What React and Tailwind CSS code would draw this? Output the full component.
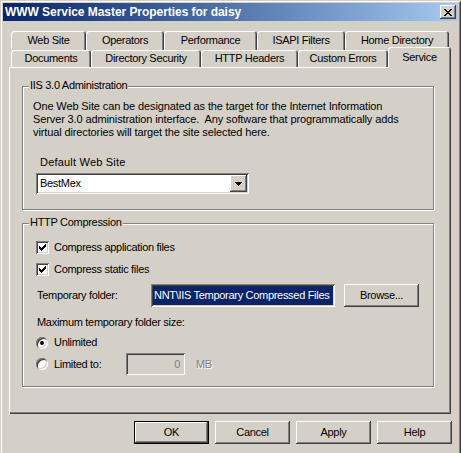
import { useState } from "react";

const raised = "shadow-[inset_-1px_-1px_#404040,inset_1px_1px_#fff,inset_-2px_-2px_#808080]";
const sunken = "shadow-[inset_1px_1px_#808080,inset_-1px_-1px_#fff,inset_2px_2px_#404040,inset_-2px_-2px_#d4d0c8]";
const tabEdge = "shadow-[inset_1px_1px_#fff,inset_-1px_0_#404040,inset_-2px_0_#808080]";

const rowOne = [
  { label: "Web Site", w: "w-[75px]" },
  { label: "Operators", w: "w-[78px]" },
  { label: "Performance", w: "w-[93px]" },
  { label: "ISAPI Filters", w: "w-[88px]" },
  { label: "Home Directory", w: "w-[104px]" },
];

const rowTwo = [
  { label: "Documents", w: "w-[80px]" },
  { label: "Directory Security", w: "w-[110px]" },
  { label: "HTTP Headers", w: "w-[97px]" },
  { label: "Custom Errors", w: "w-[90px]" },
];

function Tab({ label, w }) {
  return (
    <div className={`flex h-full ${w} items-center justify-center rounded-t-[3px] bg-[#d4d0c8] ${tabEdge}`}>
      {label}
    </div>
  );
}

function GroupBox({ title, children, className = "" }) {
  return (
    <div className={`flex w-[412px] flex-col border border-[#808080] shadow-[inset_1px_1px_#fff,1px_1px_#fff] ${className}`}>
      <span className="-mt-[8px] ml-[6px] self-start bg-[#d4d0c8] px-[1px] leading-[13px]">{title}</span>
      {children}
    </div>
  );
}

function CheckBox({ checked, label, onToggle }) {
  return (
    <div className="flex h-[13px] items-center gap-[5px]" onClick={onToggle}>
      <div className={`h-[13px] w-[13px] bg-white ${sunken}`}>
        {checked && (
          <svg width="13" height="13" viewBox="0 0 13 13" shapeRendering="crispEdges">
            <polygon points="3,5 5,7 10,2 10,5 5,10 3,8" fill="#000" />
          </svg>
        )}
      </div>
      <span className="leading-[13px]">{label}</span>
    </div>
  );
}

function Radio({ checked }) {
  return (
    <div className="flex h-[12px] w-[12px] items-center justify-center rounded-full bg-white shadow-[inset_1px_1px_#808080,inset_-1px_-1px_#fff,inset_2px_2px_#404040,inset_-2px_-2px_#d4d0c8]">
      {checked && <div className="h-[4px] w-[4px] rounded-full bg-black" />}
    </div>
  );
}

function Button({ label, isDefault }) {
  return (
    <button
      className={`flex h-[23px] w-[75px] items-center justify-center bg-[#d4d0c8] ${
        isDefault ? "border border-black" : ""
      } ${raised}`}
    >
      {label}
    </button>
  );
}

export default function App() {
  const [appFiles, setAppFiles] = useState(true);
  const [staticFiles, setStaticFiles] = useState(true);

  return (
    <div className="h-[453px] w-[461px] overflow-hidden bg-[#d4d0c8] font-['Liberation_Sans',Arial,sans-serif] text-[11px] tracking-[-0.3px] text-black">
      <div className="flex h-[480px] flex-col p-[3px] shadow-[inset_1px_1px_#d4d0c8,inset_-1px_-1px_#404040,inset_2px_2px_#fff,inset_-2px_-2px_#808080]">
        {/* Title bar */}
        <div className="flex h-[18px] items-center justify-between bg-linear-to-r from-[#0a246a] to-[#a6caf0] pl-[2px]">
          <span className="text-[12px] font-bold tracking-[-0.05px] text-white">WWW Service Master Properties for daisy</span>
          <div className={`mr-[2px] flex h-[14px] w-[16px] items-center justify-center bg-[#d4d0c8] ${raised}`}>
            <svg width="8" height="7" viewBox="0 0 8 7" shapeRendering="crispEdges">
              <path d="M0 0h2v1h-2zM6 0h2v1h-2zM1 1h2v1h-2zM5 1h2v1h-2zM2 2h4v1h-4zM3 3h2v1h-2zM2 4h4v1h-4zM1 5h2v1h-2zM5 5h2v1h-2zM0 6h2v1h-2zM6 6h2v1h-2z" fill="#000" />
            </svg>
          </div>
        </div>

        <div className="flex flex-col pl-[6px] pt-[10px]">
          {/* Tabs */}
          <div className="ml-[2px] flex h-[19px]">
            {rowOne.map((t) => (
              <Tab key={t.label} {...t} />
            ))}
          </div>
          <div className="ml-[2px] flex h-[17px]">
            {rowTwo.map((t) => (
              <Tab key={t.label} {...t} />
            ))}
            <div className={`relative z-10 -mt-[3px] flex h-[21px] w-[63px] justify-center self-start rounded-t-[3px] bg-[#d4d0c8] pt-[4px] leading-[13px] ${tabEdge}`}>
              Service
            </div>
          </div>

          {/* Panel */}
          <div className="flex h-[347px] w-[442px] flex-col bg-[#d4d0c8] pl-[13px] pt-[19px] shadow-[inset_1px_1px_#fff,inset_-1px_-1px_#404040,inset_-2px_-2px_#808080]">
            <GroupBox title="IIS 3.0 Administration">
              <div className="flex flex-col pb-[15px] pl-[10px] pt-[8px]">
                <p className="whitespace-nowrap leading-[13px] tracking-[-0.12px]">
                  One Web Site can be designated as the target for the Internet Information
                  <br />
                  Server 3.0 administration interface.&nbsp; Any software that programmatically adds
                  <br />
                  virtual directories will target the site selected here.
                </p>
                <span className="ml-[7px] mt-[17px] leading-[13px] tracking-[0.2px]">Default Web Site</span>
                <div className={`ml-[3px] mt-[4px] flex h-[21px] w-[213px] items-center bg-white p-[2px] ${sunken}`}>
                  <span className="flex-1 pl-[2px] leading-[13px]">BestMex</span>
                  <div className={`flex h-[17px] w-[17px] items-center justify-center bg-[#d4d0c8] ${raised}`}>
                    <svg width="7" height="4" viewBox="0 0 7 4" shapeRendering="crispEdges">
                      <path d="M0 0h7v1h-7zM1 1h5v1h-5zM2 2h3v1h-3zM3 3h1v1h-1z" fill="#000" />
                    </svg>
                  </div>
                </div>
              </div>
            </GroupBox>

            <GroupBox title="HTTP Compression" className="mt-[13px]">
              <div className="flex flex-col pb-[11px] pl-[13px] pt-[12px]">
                <CheckBox checked={appFiles} label="Compress application files" onToggle={() => setAppFiles(!appFiles)} />
                <div className="mt-[9px]">
                  <CheckBox checked={staticFiles} label="Compress static files" onToggle={() => setStaticFiles(!staticFiles)} />
                </div>

                <div className="mt-[8px] flex h-[23px] items-center">
                  <span className="ml-[1px] w-[114px] leading-[13px]">Temporary folder:</span>
                  <div className={`flex h-[23px] w-[184px] bg-white p-[2px] ${sunken}`}>
                    <div className="flex flex-1 items-center overflow-hidden whitespace-nowrap bg-[#0a246a] pl-[1px] text-white">
                      NNT\IIS Temporary Compressed Files
                    </div>
                  </div>
                  <div className="ml-[9px]">
                    <Button label="Browse..." />
                  </div>
                </div>

                <span className="ml-[1px] mt-[9px] leading-[13px]">Maximum temporary folder size:</span>

                <div className="mt-[7px] flex h-[13px] items-center gap-[6px]">
                  <Radio checked />
                  <span className="leading-[13px]">Unlimited</span>
                </div>

                <div className="mt-[4px] flex h-[22px] items-center">
                  <Radio />
                  <span className="ml-[6px] w-[72px] leading-[13px]">Limited to:</span>
                  <div className={`flex h-[22px] w-[59px] items-center justify-end bg-[#d4d0c8] pr-[5px] text-[#808080] ${sunken}`}>
                    0
                  </div>
                  <span className="ml-[11px] text-[#808080] [text-shadow:1px_1px_#fff]">MB</span>
                </div>
              </div>
            </GroupBox>
          </div>

          {/* Buttons */}
          <div className="mt-[7px] flex justify-end gap-[6px] pr-[6px]">
            <Button label="OK" isDefault />
            <Button label="Cancel" />
            <Button label="Apply" />
            <Button label="Help" />
          </div>
        </div>
      </div>
    </div>
  );
}
